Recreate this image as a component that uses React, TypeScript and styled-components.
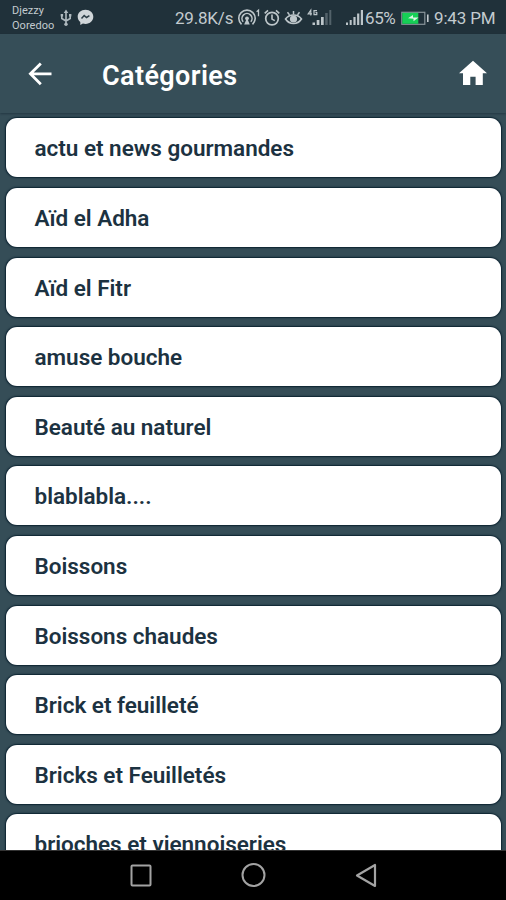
import React from 'react';
import styled, { createGlobalStyle } from 'styled-components';

const GlobalStyle = createGlobalStyle`
  * { box-sizing: border-box; }
  html, body { margin: 0; background: #354c57; overflow: hidden; }
  svg { display: block; flex: none; }
`;

const Screen = styled.div`
  width: 506px;
  height: 900px;
  display: flex;
  flex-direction: column;
  overflow: hidden;
  background: #354d57;
  font-family: Roboto, 'Liberation Sans', sans-serif;
`;

const StatusBar = styled.div`
  flex: none;
  height: 34px;
  padding: 1px 11px 0 12px;
  display: flex;
  align-items: center;
  justify-content: space-between;
  background: #20313a;
  color: #c3cbcf;
`;

const StatusGroup = styled.div<{ $gap: number }>`
  display: flex;
  align-items: center;
  gap: ${(p) => p.$gap}px;
`;

const Carriers = styled.div`
  width: 43px;
  display: flex;
  flex-direction: column;
  font-size: 11px;
  line-height: 15px;
  letter-spacing: 0.05px;
  white-space: nowrap;
`;

const StatusText = styled.span<{ $width: number; $spacing?: number }>`
  width: ${(p) => p.$width}px;
  font-size: 17px;
  line-height: 20px;
  letter-spacing: ${(p) => p.$spacing ?? 0}px;
  white-space: nowrap;
`;

const StatusIcons = styled.div`
  width: 191px;
  display: flex;
  align-items: center;
`;

const AppBar = styled.header`
  flex: none;
  height: 79px;
  padding: 0 17px 0 25px;
  display: flex;
  align-items: center;
  background: #364e58;
  box-shadow: 0 1px 2px rgba(16, 32, 44, 0.45);
`;

const Title = styled.h1`
  flex: 1;
  margin: 4px 0 0 47px;
  font-size: 27px;
  line-height: 32px;
  font-weight: 600;
  letter-spacing: 0.4px;
  color: #fff;
`;

const IconButton = styled.button`
  padding: 0;
  border: 0;
  background: none;
  color: #fff;
`;

const List = styled.main`
  flex: 1;
  min-height: 0;
  overflow: hidden;
  padding: 5.4px 5px 0 6px;
  display: flex;
  flex-direction: column;
  gap: 10.6px;
`;

const Card = styled.div`
  flex: none;
  height: 59px;
  padding: 1px 28.5px 0;
  display: flex;
  align-items: center;
  border-radius: 11px;
  background: #fff;
  box-shadow: 0 0 1.5px 1px #0b2230;
  color: #1c3241;
  font-size: 22.5px;
  font-weight: 600;
  letter-spacing: -0.02px;
  white-space: nowrap;
`;

const NavBar = styled.nav`
  flex: none;
  height: 50px;
  border-top: 1px solid #333;
  padding: 0 128px 0 129px;
  display: flex;
  align-items: center;
  justify-content: space-between;
  background: #000;
`;

const categories = [
  'actu et news gourmandes',
  'Aïd el Adha',
  'Aïd el Fitr',
  'amuse bouche',
  'Beauté au naturel',
  'blablabla....',
  'Boissons',
  'Boissons chaudes',
  'Brick et feuilleté',
  'Bricks et Feuilletés',
  'brioches et viennoiseries',
];

const UsbIcon = () => (
  <svg width="12" height="18" viewBox="0 0 12 18" fill="none" stroke="#aeb9be" strokeWidth="1.6">
    <path d="M6 2v13M1.8 6v3.5L6 12l4.2-2.5V6" />
    <path d="M6 .5 8.3 4H3.7zM.7 5h2.4v2.4H.7zM9 5h2.4v2.4H9z" fill="#aeb9be" stroke="none" />
    <circle cx="6" cy="15.2" r="1.7" fill="#aeb9be" stroke="none" />
  </svg>
);

const MessengerIcon = () => (
  <svg width="17" height="17" viewBox="0 0 17 17">
    <path d="M8.5.8C4 .8.7 3.8.7 7.8c0 2.2 1 4 2.6 5.3v3l2.6-1.5c.8.2 1.7.3 2.6.3 4.5 0 7.8-3 7.8-7.1S13 .8 8.5.8z" fill="#d0d6d9" />
    <path d="m4.5 9.6 2.7-3 2.4 1.9 2.8-1.8" fill="none" stroke="#2d3e47" strokeWidth="1.5" />
  </svg>
);

const SignalIcons = () => (
  <svg width="127" height="24" viewBox="238 6 127 24" fill="none" stroke="#bdc6ca" strokeWidth="1.6">
    <path d="M241.5 24.4a8.2 8.2 0 1 1 11 0M243.2 21.7a5 5 0 1 1 7.6 0" />
    <circle cx="247" cy="18.3" r="1.9" fill="#bdc6ca" stroke="none" />
    <path d="M247 18l2.8 6.5h-5.6z" fill="#bdc6ca" stroke="none" />
    <path d="m256.6 11.7 1.9-1.5v6" strokeWidth="1.3" />
    <circle cx="272" cy="18.6" r="6.3" strokeWidth="1.7" />
    <path d="M272 14.6v4.5l2.8 1.5M264.7 13.3l3.3-3M279.3 13.3l-3.3-3" />
    <path d="M285.5 19c4-5.4 12.2-5.4 16 0-4 6-12 6-16 0z" />
    <circle cx="293.5" cy="19" r="3.6" fill="#bdc6ca" stroke="none" />
    <path d="M293.5 11v3.5M287.5 12.3l2 2.6M299.5 12.3l-2 2.6" strokeWidth="1.5" />
    <path d="M310.8 15.5v-5.3l-2.6 3.7h3.8M317 10.7h-3v4h2.8v-2h-1.3" strokeWidth="1.2" />
    <g fill="#bdc6ca" stroke="none">
      <path d="M312.5 22.5h2.5V25h-2.5zM316.7 20h2.7v5h-2.7zM321 17h2.7v8H321z" />
      <path d="M325.2 13h2.5v12h-2.5zM329.3 10h2v15h-2z" fill="#53626a" />
      <path d="M346 22.5h2V25h-2zM349.7 20h2v5h-2zM353.4 17h2.2v8h-2.2zM357.1 13.5h2.2V25h-2.2zM360.8 10h2.2v15h-2.2z" />
    </g>
  </svg>
);

const BatteryIcon = () => (
  <svg width="30" height="24" viewBox="399 6 30 24" fill="none">
    <rect x="401.8" y="12.3" width="23" height="12" strokeWidth="1.2" stroke="#88949a" />
    <path d="M402.3 12.8h16v11h-16z" fill="#16cf56" />
    <path d="m408 18.3 5-3.2v2.4h5.5l-5 3.7v-2.4z" fill="#dbf6e4" />
    <path d="M427.8 14.5v7.5" stroke="#c3cbcf" strokeWidth="1.6" />
  </svg>
);

const BackArrow = () => (
  <svg width="30" height="26" viewBox="25 61 30 26" fill="none" stroke="#fff" strokeWidth="2.8">
    <path d="M51.5 73.8H30M40.8 63.4 30.4 73.8l10.4 10.4" />
  </svg>
);

const HomeIcon = () => (
  <svg width="32" height="30" viewBox="457 59 32 30" fill="#fff">
    <path d="M473 60.7 459 73.2h4v11.7h7.3v-8.2h5.3v8.2h7.2V73.2h4.2z" />
  </svg>
);

const RecentsIcon = () => (
  <svg width="24" height="24" fill="none" stroke="#a3a3a3" strokeWidth="2">
    <rect x="2.5" y="1.5" width="19" height="20" rx="1" />
  </svg>
);

const NavHomeIcon = () => (
  <svg width="25" height="25" fill="none" stroke="#a3a3a3" strokeWidth="2">
    <circle cx="12.5" cy="12" r="11" />
  </svg>
);

const NavBackIcon = () => (
  <svg width="24" height="26" fill="none" stroke="#a3a3a3" strokeWidth="2.2" strokeLinejoin="round">
    <path d="M21 2v21L3 12.5z" />
  </svg>
);

export default function App() {
  return (
    <>
      <GlobalStyle />
      <Screen>
        <StatusBar>
          <StatusGroup $gap={5}>
            <Carriers>
              <span>Djezzy</span>
              <span>Ooredoo</span>
            </Carriers>
            <UsbIcon />
            <MessengerIcon />
          </StatusGroup>
          <StatusGroup $gap={5}>
            <StatusText $width={58} $spacing={-0.2}>29.8K/s</StatusText>
            <StatusIcons>
              <SignalIcons />
              <StatusText $width={35} $spacing={-0.4}>65%</StatusText>
              <BatteryIcon />
            </StatusIcons>
            <StatusText $width={61} $spacing={-0.15}>9:43 PM</StatusText>
          </StatusGroup>
        </StatusBar>
        <AppBar>
          <IconButton aria-label="Retour">
            <BackArrow />
          </IconButton>
          <Title>Catégories</Title>
          <IconButton aria-label="Accueil">
            <HomeIcon />
          </IconButton>
        </AppBar>
        <List>
          {categories.map((name) => (
            <Card key={name}>{name}</Card>
          ))}
        </List>
        <NavBar>
          <RecentsIcon />
          <NavHomeIcon />
          <NavBackIcon />
        </NavBar>
      </Screen>
    </>
  );
}
